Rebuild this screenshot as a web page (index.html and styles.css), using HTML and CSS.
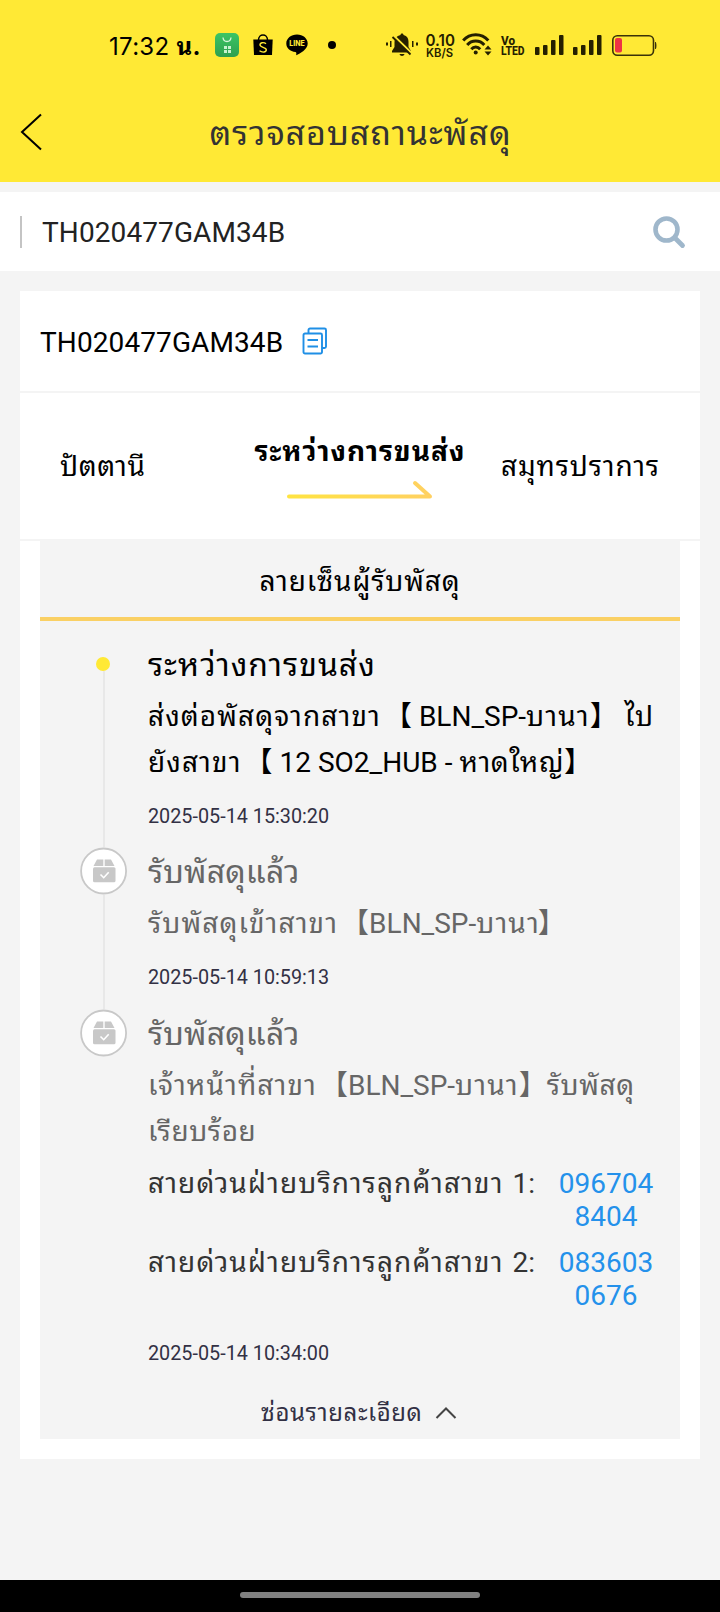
FILE: index.html
```html
<!DOCTYPE html>
<html lang="th">
<head>
<meta charset="utf-8">
<title>ตรวจสอบสถานะพัสดุ</title>
<link rel="stylesheet" href="styles.css">
</head>
<body>
<header class="header">
  <div class="status">
    <span class="clock">17:32 <b class="clock-unit">น.</b></span>
    <svg class="ic-app" width="24" height="24" viewBox="0 0 24 24"><defs><linearGradient id="g" x1="0" y1="0" x2="0" y2="1"><stop offset="0" stop-color="#3cc564"/><stop offset="1" stop-color="#2fa04f"/></linearGradient></defs><rect width="24" height="24" rx="5" fill="url(#g)"/><path d="M8 4.500c.5 5.300 7.500 5.300 8 0" fill="none" stroke="#d8f5dc" stroke-width="1.300"/><path d="M9 13h3v3h-3zM13 13h3v3h-3zM9 17h3v3h-3zM13 17h3v3h-3z" fill="#c9f2d0"/></svg>
    <svg class="ic-shop" width="20" height="22" viewBox="0 0 20 22"><path d="M.3 5.500h19.400l-.7 15.500H1z"/><path d="M5.500 6c0-6.700 9-6.700 9 0" fill="none" stroke="#000" stroke-width="1.500"/><path d="M13 9.800c-2-1.800-6-1.500-6 1 0 3 6.300 2 6.300 5 0 2.800-4.300 2.900-6.800 1" fill="none" stroke="#ffe935" stroke-width="1.400"/></svg>
    <svg class="ic-line" width="22" height="22" viewBox="0 0 22 22"><path d="M11 .5C5 .5.3 4.400.3 9.400c0 4.500 3.700 7.900 9.200 8.600 1.200.3.800 1.500.7 3.300 4-1.900 11.500-6 11.500-11.900C21.700 4.400 17 .5 11 .5z"/><text class="line-text" x="3.300" y="12" textLength="15.400" lengthAdjust="spacingAndGlyphs">LINE</text></svg>
    <span class="more-dot"></span>
    <svg class="ic-bell" width="34" height="24" viewBox="0 0 34 24" fill="#252000"><path d="M1 9.500h2v3H1zM5 8h1.500v6H5zM27 8h1.500v6H27zM31 9.500h2v3h-2z"/><path d="M17 .5c1 0 1.500.7 1.500 1.600 3.700.9 5 3.500 5 6.900v5l2.500 4v1.500H7V18l2.500-4V9c0-3.400 2-6 6-6.900 0-.9.500-1.600 1.500-1.600z"/><path d="M14.500 21h5c-.5 2.500-4.500 2.500-5 0z"/><path d="M8.500 2.500l17.500 17" stroke="#ffe935" stroke-width="2.200"/><path d="M7.500 4l18 17.500" stroke="#252000" stroke-width="1.800"/></svg>
    <svg class="ic-net" width="30" height="26" viewBox="0 0 30 26"><text class="net-num" x="-.5" y="13.800" textLength="29.500" lengthAdjust="spacingAndGlyphs">0.10</text><text class="net-unit" x="0" y="24.800" textLength="27" lengthAdjust="spacingAndGlyphs">KB/S</text></svg>
    <svg class="ic-wifi" width="30" height="24" viewBox="0 0 30 24"><g fill="none" stroke="#252000" stroke-width="3"><path d="M1.200 8.500C8 .9 19.500.9 26.300 8.500"/><path d="M5.200 13c4.600-5.200 12.500-5.200 17.100 0"/><path d="M9.300 17.200c2.500-2.800 6.400-2.800 8.900 0"/></g><circle cx="13.700" cy="20.500" r="2" fill="#252000"/><path d="M26 13.500l3.500 4h-7zM26 23.500l3.500-4h-7z" fill="#252000"/></svg>
    <svg class="ic-volte" width="24" height="22" viewBox="0 0 24 22"><text class="volte" x="0" y="9.500" textLength="14" lengthAdjust="spacingAndGlyphs">Vo</text><text class="volte" x="0" y="19.600" textLength="23.500" lengthAdjust="spacingAndGlyphs">LTED</text></svg>
    <svg class="ic-sig1" width="29" height="20" viewBox="0 0 29 20" fill="#252000"><rect y="12" width="4.500" height="8" rx="1"/><rect x="8" y="10" width="4.500" height="10" rx="1"/><rect x="16" y="5" width="4.500" height="15" rx="1"/><rect x="24" width="4.500" height="20" rx="1"/></svg>
    <svg class="ic-sig2" width="29" height="20" viewBox="0 0 29 20" fill="#252000"><rect y="12" width="4.500" height="8" rx="1"/><rect x="8" y="10" width="4.500" height="10" rx="1"/><rect x="16" y="5" width="4.500" height="15" rx="1"/><rect x="24" width="4.500" height="20" rx="1"/></svg>
    <svg class="ic-bat" width="46" height="22" viewBox="0 0 46 22"><rect x=".8" y=".8" width="40.700" height="19.400" rx="4.500" fill="none" stroke="#3a3208" stroke-width="1.600"/><rect x="3" y="3" width="7" height="14.500" rx="2" fill="#ee3344"/><path d="M43 7h.7c1 1 1 6 0 7H43z" fill="#3a3208"/></svg>
  </div>
  <div class="nav">
    <svg class="back" width="22" height="38" viewBox="0 0 22 38"><path d="M21 1.500L2 19l19 17.500" fill="none" stroke="#000" stroke-width="2"/></svg>
    <h1 class="title">ตรวจสอบสถานะพัสดุ</h1>
  </div>
</header>
<div class="search">
  <span class="caret"></span>
  <span class="search-text">TH020477GAM34B</span>
  <svg width="33" height="33" viewBox="0 0 33 33" fill="none" stroke="#9fb7cb"><circle cx="13.500" cy="13.500" r="11" stroke-width="4.600"/><path d="M22 22l7.500 7.500" stroke-width="4.800" stroke-linecap="round"/></svg>
</div>
<main class="card">
  <div class="idrow"><span class="id">TH020477GAM34B</span>
    <svg class="copy" width="26" height="28" viewBox="0 0 26 28" fill="none" stroke="#1f8fe6" stroke-width="1.900"><path d="M6.500 6.500V3a1.500 1.500 0 0 1 1.500-1.500h14.500A1.500 1.500 0 0 1 24 3V19.500a1.500 1.500 0 0 1-1.500 1.500H20M1.500 8A1.500 1.500 0 0 1 3 6.500h15.500A1.500 1.500 0 0 1 20 8v17a1.500 1.500 0 0 1-1.500 1.500H3A1.500 1.500 0 0 1 1.500 25zM5.500 13h10.500M5.500 19.500h10.500"/></svg>
  </div>
  <div class="route">
    <span class="from">ปัตตานี</span>
    <div class="mid"><b class="state">ระหว่างการขนส่ง</b>
      <svg width="148" height="20" viewBox="0 0 148 20"><defs><linearGradient id="a" gradientUnits="userSpaceOnUse" x1="0" y1="0" x2="148" y2="0"><stop offset="0" stop-color="#ffe441"/><stop offset="1" stop-color="#ffd062"/></linearGradient></defs><path d="M3 16.500H144L129 3" fill="none" stroke="url(#a)" stroke-width="4" stroke-linecap="round" stroke-linejoin="round"/></svg>
    </div>
    <span class="to">สมุทรปราการ</span>
  </div>
  <section class="panel">
    <h2 class="sign">ลายเซ็นผู้รับพัสดุ</h2>
    <div class="timeline">
      <article class="event first">
        <div class="rail"><span class="dot"></span><span class="line"></span></div>
        <div class="body">
          <h3>ระหว่างการขนส่ง</h3>
          <p><span class="th lead">ส่งต่อพัสดุจากสาขา</span>【 BLN_SP-<span class="th">บานา</span>】 <span class="th">ไป</span><br><span class="th lead">ยังสาขา</span>【 12 SO2_HUB - <span class="th-tight">หาดใหญ่</span>】</p>
          <time>2025-05-14 15:30:20</time>
        </div>
      </article>
      <article class="event second">
        <div class="rail"><svg width="48" height="48" viewBox="0 0 48 48"><circle cx="23.600" cy="24" r="22.500" fill="#fff" stroke="#c8c8c8" stroke-width="1.800"/><g fill="#c8c8c8"><path d="M17 12.500h6.300V19H13.500zM24.700 12.500H31l3.500 6.500h-9.800z"/><rect x="13" y="20.300" width="22.500" height="15" rx="1.500"/></g><path d="M20.500 27.500l3.200 3.200 5-5.500" fill="none" stroke="#fff" stroke-width="1.600"/></svg><span class="line"></span></div>
        <div class="body">
          <h3 class="done">รับพัสดุแล้ว</h3>
          <p><span class="th lead">รับพัสดุเข้าสาขา</span>【BLN_SP-<span class="th tail">บานา</span>】</p>
          <time>2025-05-14 10:59:13</time>
        </div>
      </article>
      <article class="event third">
        <div class="rail"><svg width="48" height="48" viewBox="0 0 48 48"><circle cx="23.600" cy="24" r="22.500" fill="#fff" stroke="#c8c8c8" stroke-width="1.800"/><g fill="#c8c8c8"><path d="M17 12.500h6.300V19H13.500zM24.700 12.500H31l3.500 6.500h-9.800z"/><rect x="13" y="20.300" width="22.500" height="15" rx="1.500"/></g><path d="M20.500 27.500l3.200 3.200 5-5.500" fill="none" stroke="#fff" stroke-width="1.600"/></svg></div>
        <div class="body">
          <h3 class="done">รับพัสดุแล้ว</h3>
          <p><span class="th lead">เจ้าหน้าที่สาขา</span>【BLN_SP-<span class="th">บานา</span>】<span class="th-tight">รับพัสดุ</span><br><span class="th-tight">เรียบร้อย</span></p>
          <div class="hotline"><span class="hl"><span class="th">สายด่วนฝ่ายบริการลูกค้าสาขา</span> 1:</span><a class="tel">0967048404</a></div>
          <div class="hotline"><span class="hl"><span class="th">สายด่วนฝ่ายบริการลูกค้าสาขา</span> 2:</span><a class="tel">0836030676</a></div>
          <time>2025-05-14 10:34:00</time>
        </div>
      </article>
    </div>
    <div class="toggle"><span>ซ่อนรายละเอียด</span><svg width="22" height="14" viewBox="0 0 22 14"><path d="M1.500 12L11 2.500l9.500 9.500" fill="none" stroke="#444" stroke-width="2"/></svg></div>
  </section>
</main>
<footer class="navbar"><span class="pill"></span></footer>
</body>
</html>
```
FILE: styles.css
```css
* { box-sizing: border-box; }
body { margin: 0; width: 720px; height: 1612px; display: flex; flex-direction: column; background: #f4f4f4; font-family: Roboto, "Noto Sans Thai Looped", "Noto Looped Thai", "Droid Sans Thai", Loma, Waree, Umpush, Garuda, Laksaman, Sarabun, Tahoma, FreeSans, "Noto Sans Thai", "Noto Sans CJK SC", sans-serif; font-size: 28px; color: #000; overflow: hidden; white-space: nowrap; }
h1, h2, h3, p { margin: 0; font-weight: 400; font-size: inherit; }
svg { display: block; flex: none; overflow: visible; }
.header { height: 182px; background: #ffe935; }
.status { height: 90px; padding-left: 109px; display: flex; align-items: flex-start; }
.clock { width: 106px; height: 30px; margin-top: 32px; font: 24px/30px Inter, "Noto Sans Thai Looped", Loma, Waree, "Noto Sans Thai", sans-serif; letter-spacing: .3px; }
.clock-unit { font-weight: 700; }
.ic-app { margin-top: 33px; }
.ic-shop { margin: 34px 0 0 14px; }
.ic-line { margin: 34px 0 0 13px; }
.line-text { font: 800 7px Inter, sans-serif; fill: #ffe935; }
.more-dot { width: 8px; height: 8px; border-radius: 50%; background: #000; margin: 41px 0 0 20px; }
.ic-bell { margin: 33px 0 0 49px; }
.ic-net { margin: 32px 0 0 7px; }
.net-num { font: 600 16px Inter, sans-serif; fill: #252000; }
.net-unit { font: 600 12px Inter, sans-serif; fill: #252000; }
.ic-wifi { margin: 32px 0 0 6px; }
.ic-volte { margin: 35px 0 0 9px; }
.volte { font: 800 12.5px Roboto, sans-serif; fill: #252000; }
.ic-sig1 { margin: 35px 0 0 10px; }
.ic-sig2 { margin: 35px 0 0 9px; }
.ic-bat { margin: 35px 0 0 10px; }
.nav { height: 92px; display: flex; align-items: flex-start; padding-left: 20px; }
.back { margin-top: 23px; }
.title { width: 637px; text-align: center; font-size: 34px; line-height: 46px; margin-top: 20px; color: #333; letter-spacing: .95px; }
.search { height: 79px; margin-top: 10px; background: #fff; display: flex; padding: 24px 34px 0 20px; flex: none; }
.caret { width: 2px; height: 32px; background: #c4c4c4; }
.search-text { flex: 1; padding-left: 20px; line-height: 34px; color: #222; letter-spacing: .1px; }
.card { width: 680px; height: 1168px; margin: 20px 20px 0; background: #fff; flex: none; }
.idrow { height: 102px; border-bottom: 2px solid #f4f4f4; padding: 35px 0 0 20px; display: flex; gap: 19px; }
.id { line-height: 34px; letter-spacing: .1px; }
.copy { margin-top: 1px; }
.route { height: 148px; border-bottom: 2px solid #f4f4f4; padding: 0 39px 0 40px; display: flex; line-height: 40px; }
.from, .to { margin-top: 54px; }
.from { width: 194px; letter-spacing: .6px; }
.to { width: 160px; margin-left: auto; letter-spacing: .85px; }
.mid { width: 212px; margin-top: 39px; display: flex; flex-direction: column; align-items: center; }
.state { letter-spacing: 1px; }
.mid svg { margin-top: 8px; }
.panel { width: 640px; height: 898px; margin: 0 20px; background: #f4f4f4; }
.sign { height: 80px; padding-top: 21px; line-height: 40px; text-align: center; border-bottom: 4px solid #fad064; letter-spacing: .85px; }
.event { display: flex; color: #666; }
.rail { width: 108px; padding-left: 40px; display: flex; flex-direction: column; }
.body { width: 510px; }
.first { height: 226px; color: #000; }
.first .rail { padding-top: 36px; }
.dot { width: 14px; height: 14px; border-radius: 50%; background: #ffe935; margin-left: 16px; flex: none; }
.line { width: 2px; flex: 1; background: #e8e8e8; margin-left: 23px; }
.second { height: 162px; }
.body h3 { font-size: 32px; line-height: 44px; letter-spacing: 1px; }
.body .done { letter-spacing: .15px; }
.body p { line-height: 46px; }
.th { letter-spacing: 1.1px; }
.th-tight { letter-spacing: .6px; }
.lead { margin-right: 3px; }
.tail { margin-right: -2px; }
.body time { display: block; font-size: 19.8px; line-height: 24px; color: #323044; }
.first time, .second time { margin-top: 19px; }
.first .body { padding-top: 22px; }
.second .body, .third .body { padding-top: 3px; }
.first p, .second p, .third p { margin-top: 7px; }
.hotline { display: flex; height: 79px; color: #333; line-height: 33px; }
.third p + .hotline { margin-top: 12px; }
.hl { width: 408px; }
.hl .th { margin-right: 2px; }
.tel { width: 100px; text-align: center; white-space: normal; word-break: break-all; color: #2491eb; }
.third time { margin-top: 17px; }
.third { height: 387px; }
.toggle { height: 40px; padding-left: 221px; display: flex; font-size: 24px; line-height: 34px; color: #323044; }
.toggle span { width: 174px; letter-spacing: .6px; }
.toggle svg { margin-top: 10px; }
.navbar { margin-top: auto; height: 32px; background: #000; display: flex; justify-content: center; padding-top: 12px; flex: none; }
.pill { width: 240px; height: 6px; border-radius: 3px; background: #808080; }
```
